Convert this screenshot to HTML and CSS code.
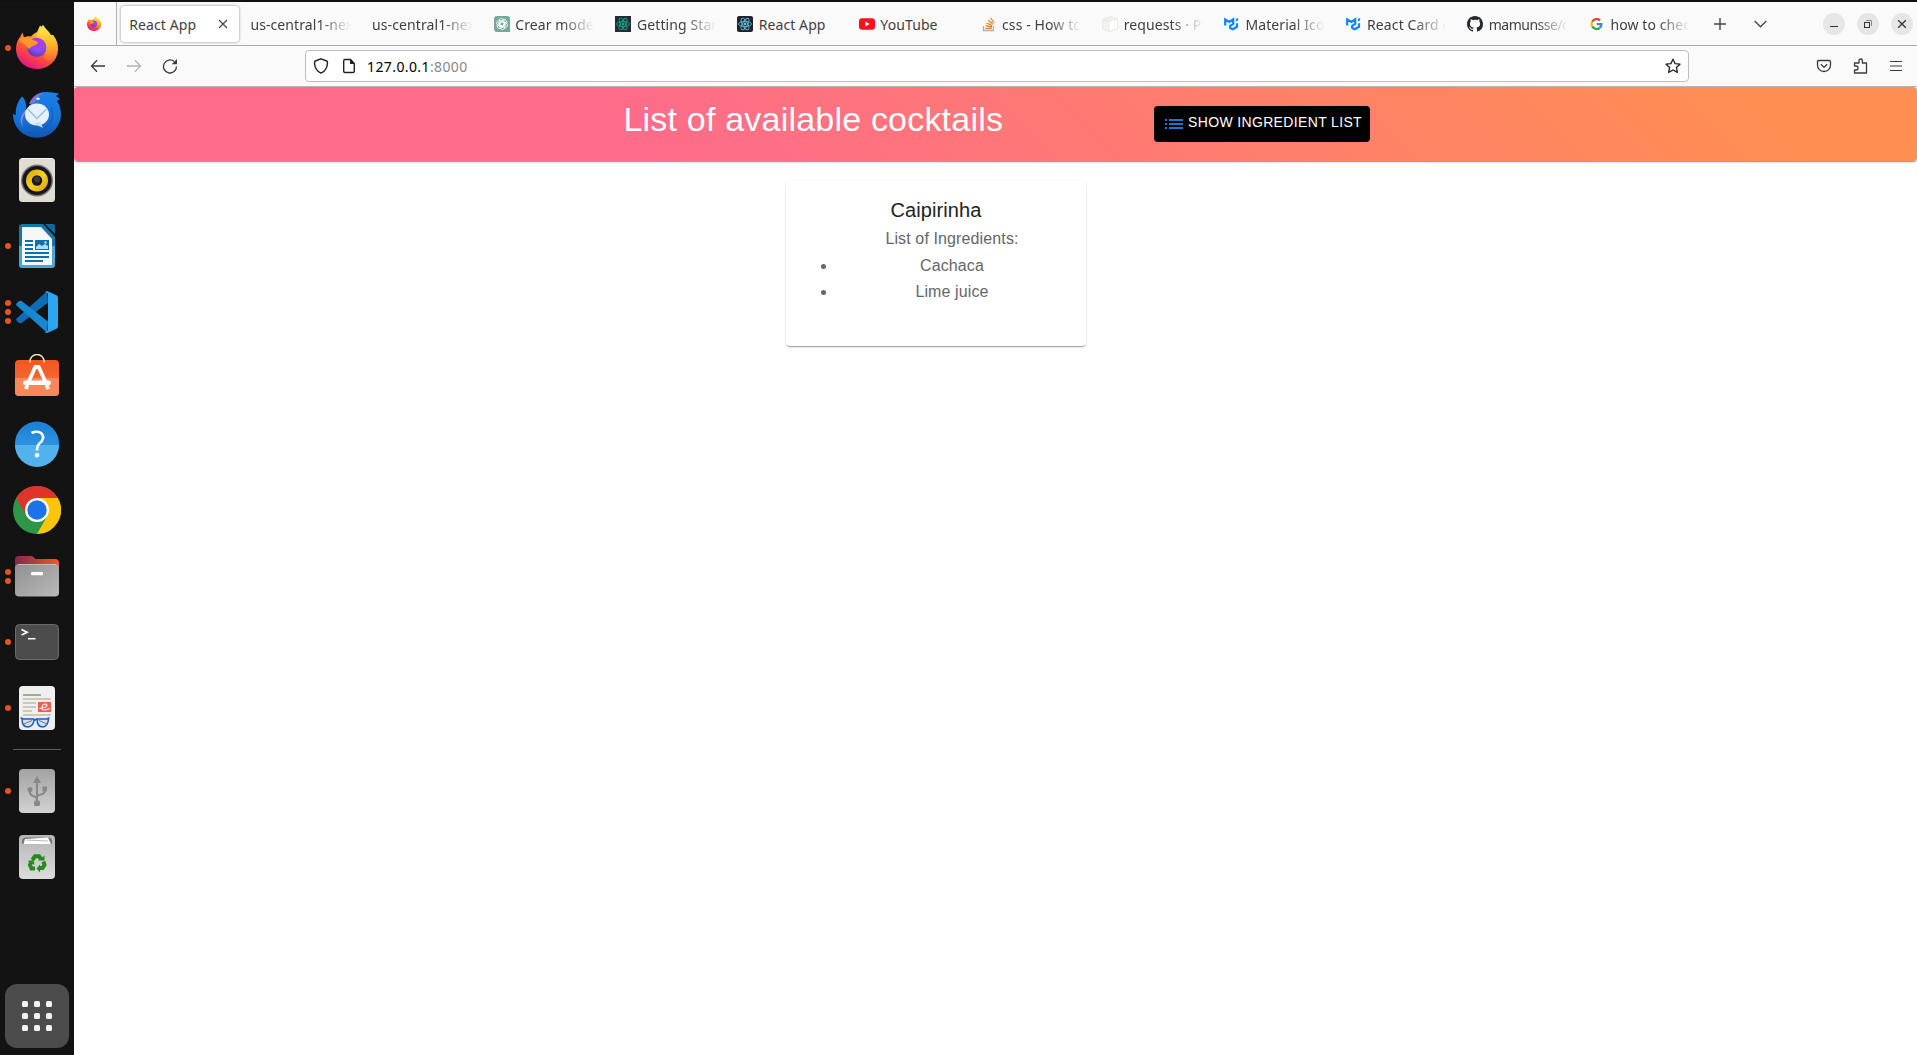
FILE: index.html
```html
<!DOCTYPE html>
<html lang="en">
<head>
<meta charset="utf-8">
<title>React App</title>
<link rel="stylesheet" href="styles.css">
</head>
<body>
<svg class="defs" width="0" height="0" aria-hidden="true">
  <defs>
    <linearGradient id="fxBody" x1=".8" y1="0" x2=".3" y2="1"><stop offset="0" stop-color="#fff44f"/><stop offset=".35" stop-color="#ffa21f"/><stop offset=".68" stop-color="#ff4b3c"/><stop offset="1" stop-color="#e0128c"/></linearGradient>
    <linearGradient id="fxTail" x1="0" y1="0" x2="0" y2="1"><stop offset="0" stop-color="#fff04c"/><stop offset=".55" stop-color="#ffb52a"/><stop offset="1" stop-color="#ff6a35"/></linearGradient>
    <radialGradient id="fxGlobe" cx=".6" cy=".25" r=".8"><stop offset="0" stop-color="#b833e1"/><stop offset=".5" stop-color="#8d4df0"/><stop offset="1" stop-color="#5a3ab8"/></radialGradient>
    <linearGradient id="bird" x1="0" y1="0" x2="0" y2="1"><stop offset="0" stop-color="#1c80e6"/><stop offset=".6" stop-color="#1373d9"/><stop offset="1" stop-color="#1454b0"/></linearGradient>
    <linearGradient id="yellow" x1="0" y1="0" x2="1" y2="1"><stop offset="0" stop-color="#d9a200"/><stop offset=".5" stop-color="#f7cf2b"/><stop offset="1" stop-color="#d9a200"/></linearGradient>
    <linearGradient id="store" x1="0" y1="0" x2="0" y2="1"><stop offset="0" stop-color="#f2571f"/><stop offset="1" stop-color="#f77443"/></linearGradient>
    <linearGradient id="help" x1="0" y1="0" x2="0" y2="1"><stop offset="0" stop-color="#1a7fd6"/><stop offset="1" stop-color="#3da4e6"/></linearGradient>
    <linearGradient id="folderBack" x1="0" y1="0" x2="1" y2="0"><stop offset="0" stop-color="#80294f"/><stop offset="1" stop-color="#f05a22"/></linearGradient>
    <linearGradient id="grey" x1="0" y1="0" x2="1" y2="1"><stop offset="0" stop-color="#8f8f8f"/><stop offset="1" stop-color="#bababa"/></linearGradient>
    <linearGradient id="drive" x1="0" y1="0" x2="0" y2="1"><stop offset="0" stop-color="#a2a2a2"/><stop offset="1" stop-color="#d2d2d2"/></linearGradient>
    <linearGradient id="can" x1="0" y1="0" x2="0" y2="1"><stop offset="0" stop-color="#b5b5b5"/><stop offset="1" stop-color="#dcdcdc"/></linearGradient>
    <symbol id="firefox" viewBox="0 0 48 48">
      <path d="M27 1.500C30 3 31.500 6 34 9.500C36.500 11 38 13 38.500 15L40 11C43.500 15.500 45.200 20 45 25.500C44.500 37 35.500 45 24 45C12 45 3.500 36.500 3 25.500C3 20 4.500 16 7 13L9.500 8.500L11 13.500C14 12 16 12 18 12.500C21 9 23 8.500 24 8Z" fill="url(#fxBody)"/>
      <path d="M30 .8C32 5 36 7 38 11L40 11C44 16 45.500 23 44 29C41 38 34 38 31 34C34 28 34 22 30 18C27 15 24 14 23 13C24 8 27 6 30 .8Z" fill="url(#fxTail)"/>
      <circle cx="23.700" cy="23.400" r="9.600" fill="url(#fxGlobe)"/>
      <path d="M6 16C10 12 16 13 20 16C23 17 26 18 25 19C22 22 19 21 16 25C14 22 10 19 6 16Z" fill="#ff982c"/>
    </symbol>
    <symbol id="react" viewBox="0 0 16 16">
      <g fill="none" stroke="currentColor" stroke-width=".9"><ellipse cx="8" cy="8" rx="6.500" ry="2.500"/><ellipse cx="8" cy="8" rx="6.500" ry="2.500" transform="rotate(60 8 8)"/><ellipse cx="8" cy="8" rx="6.500" ry="2.500" transform="rotate(120 8 8)"/></g><circle cx="8" cy="8" r="1.400" fill="currentColor"/>
    </symbol>
    <symbol id="mui" viewBox="0 0 16 16">
      <path d="M1.200 9.500V3.400L5.400 6L9.200 3.400V8L6.200 9.800V12L8.800 13.200L13 10.800V7.200" fill="none" stroke="#0a84ff" stroke-width="2.200"/><path d="M11.900 3L14.100 2V4.400L11.900 5.500Z" fill="#0a84ff"/>
    </symbol>
  </defs>
</svg>
<div class="desktop">
  <nav class="dock">
    <div class="slot"><span class="dots"><i></i></span><svg viewBox="0 0 48 48"><use href="#firefox"/></svg></div>
    <div class="slot"><span class="dots"></span><svg viewBox="0 0 48 48">
      <path d="M9 6.500C12 9 14 14 13 20L17 16C18 7 24 2 33 2C38 2 42 3 46 3.500L43 6L47 9L44 11C47 16 48 20 48 25C47 38 37 47.700 24 47.700C10 47.700 0 37 0 24L3 25C2 18 5 11 9 6.500Z" fill="url(#bird)"/>
      <path d="M16 14C19 6 25 3 31 2.500C26 6 23 9 22 13Z" fill="#7b70dc"/>
      <path d="M13 20C7 25 6 32 10 37C8 30 10 25 14 22Z" fill="#8b8be6"/>
      <ellipse cx="24" cy="24.500" rx="12" ry="11" fill="#e7f0fc"/><path d="M20 33L30 38L27 32Z" fill="#c9dff8"/>
      <path d="M14.500 19L24 28.500L33.500 19" fill="none" stroke="#9bbbe0" stroke-width="1.300"/>
      <ellipse cx="25" cy="8.800" rx="1.800" ry="1.200" fill="#e9f4ff"/><path d="M38 17C41 26 39 34 31 39" fill="none" stroke="#1960bd" stroke-width="1.500"/>
    </svg></div>
    <div class="slot"><span class="dots"></span><svg viewBox="0 0 48 48">
      <rect x="6" y="2" width="36" height="44" rx="3.500" fill="#e2ddd3"/><path d="M9 2.500H39" stroke="#f7f5ef"/>
      <circle cx="24" cy="24.500" r="16" fill="#77767b"/><circle cx="24" cy="24.500" r="14.600" fill="#16141c"/><circle cx="24" cy="24.500" r="11" fill="url(#yellow)"/><circle cx="24" cy="24.500" r="5.200" fill="#17181a"/><circle cx="24" cy="23.500" r="3" fill="#3a3a3c"/>
    </svg></div>
    <div class="slot"><span class="dots"><i></i></span><svg viewBox="0 0 48 48">
      <path d="M9 2H30L42 15V42.500A3.500 3.500 0 0 1 38.500 46H9.500A3.500 3.500 0 0 1 6 42.500V5.500A3.500 3.500 0 0 1 9 2Z" fill="#1575ad"/><path d="M6 24H42V42.500A3.500 3.500 0 0 1 38.500 46H9.500A3.500 3.500 0 0 1 6 42.500Z" fill="#45a6da"/>
      <path d="M10 5H28L39 17V43H10A1 1 0 0 1 9 42V6A1 1 0 0 1 10 5Z" fill="#f7f7f7"/><path d="M32 2H40A2 2 0 0 1 42 4V12Z" fill="#0c6b9f"/>
      <path d="M12 19H20M12 23H20M12 27H20M12 31H36M12 35H36M12 39H30" stroke="#126ea8" stroke-width="2"/><rect x="22" y="18" width="14" height="10" fill="#126ea8"/><path d="M23 27V25L26 22L29 24L32 22L35 24V27Z" fill="#a9ddf8"/><circle cx="32.500" cy="20.500" r="1.200" fill="#a9ddf8"/>
    </svg></div>
    <div class="slot"><span class="dots"><i></i><i></i><i></i></span><svg viewBox="0 0 48 48">
      <path d="M34 3.200L3.600 30.500Q2.600 31.800 3.800 32.900L6.300 35Q7.500 35.700 8.600 34.900L35 14.500Z" fill="#0c6cb5"/>
      <path d="M34 44.800L3.600 17.500Q2.600 16.200 3.800 15.100L6.300 13Q7.500 12.300 8.600 13.100L35 33.500Z" fill="#1687d0"/>
      <path d="M34 3L43.500 7.300Q45 8 45 9.700V38.300Q45 40 43.500 40.700L34 45C32.500 45 31.800 44.200 31.500 43.800Q35 44 35 41V7Q35 4 31.500 4.200Z" fill="#2aa6f2"/>
    </svg></div>
    <div class="slot"><span class="dots"></span><svg viewBox="0 0 48 48">
      <rect x="2" y="6" width="44" height="36" rx="4" fill="url(#store)"/><path d="M2 24H46V38A4 4 0 0 1 42 42H6A4 4 0 0 1 2 38Z" fill="#f88759"/>
      <path d="M17 8.500V7.500A7 7 0 0 1 31 7.500V8.500" fill="none" stroke="#f5dfb8" stroke-width="1.500"/>
      <path d="M15.500 28L22.300 13H25.700L32.500 28M14.500 31L12.800 35M33.500 31L35.200 35" fill="none" stroke="#fff" stroke-width="3.800"/><rect x="10" y="26.500" width="28" height="4.500" rx="2.200" fill="#fff"/>
    </svg></div>
    <div class="slot"><span class="dots"></span><svg viewBox="0 .5 48 48">
      <circle cx="24" cy="24" r="22" fill="url(#help)"/><path d="M2 25.500H46A22 22 0 0 1 2 25.500Z" fill="#51b2ed"/>
      <path d="M18.500 13.500Q24 11 28 13.500Q32 17 28.500 22Q24 25 24 31" fill="none" stroke="#fff" stroke-width="2.600"/><circle cx="24" cy="35.700" r="2.300" fill="#fff"/>
    </svg></div>
    <div class="slot"><span class="dots"></span><svg viewBox="0 0 48 48">
      <circle cx="24" cy="24" r="24" fill="#2d9648"/><path d="M3.200 12A24 24 0 0 1 44.800 12H24V24L13.600 30Z" fill="#e0342b"/><path d="M44.800 12A24 24 0 0 1 24 48L34.400 30L24 12Z" fill="#fdc60b"/>
      <circle cx="24" cy="24" r="12" fill="#fff"/><circle cx="24" cy="24" r="9.700" fill="#1a73e8"/>
    </svg></div>
    <div class="slot"><span class="dots"><i></i><i></i></span><svg viewBox="0 0 48 48">
      <path d="M2 16V8A4 4 0 0 1 6 4H18Q20 4 21 5.500L22.500 7H42A4 4 0 0 1 46 11V16Z" fill="url(#folderBack)"/><rect x="2" y="12" width="44" height="32.500" rx="4" fill="url(#grey)"/><path d="M5 12.500H43" stroke="#bcbcbc"/><rect x="18" y="20" width="12" height="3.200" rx="1" fill="#fff"/>
    </svg></div>
    <div class="slot"><span class="dots"><i></i></span><svg viewBox="0 0 48 48">
      <rect x="2.500" y="6.500" width="43" height="35" rx="4" fill="#4c4c4c" stroke="#6b6b6b"/><path d="M8.500 11.500L14.200 14.200L8.500 17" fill="none" stroke="#fff" stroke-width="1.600"/><path d="M15 20.700H22.500" stroke="#fff" stroke-width="1.500"/>
    </svg></div>
    <div class="slot"><span class="dots"><i></i></span><svg viewBox="0 0 48 48">
      <rect x="6" y="2" width="36" height="44" rx="4" fill="#efefef"/><path d="M10 11H28" stroke="#aaa58f" stroke-width="2"/><path d="M10 15H38M10 19H23M10 23H23M10 27H19M10 31H38" stroke="#cdc9ba" stroke-width="2"/>
      <rect x="25" y="18" width="13" height="10" fill="#f75c4f"/><path d="M26.500 24.500Q34.500 23.500 34 21Q32.500 18.800 29.500 21.500Q27.500 25.500 31 26Q33.500 26 36.500 24.500" fill="none" stroke="#fff" stroke-width="1.100"/>
      <path d="M7.500 33.700L10 35H20.500L22 36L23.500 35H34L36.500 33.700M9 35Q9 43 15 43Q21 42 21 35M24 35Q24 43 30 43Q35 42 35.500 35" fill="#8db4e444" stroke="#1c5fc0" stroke-width="1.500"/><path d="M11 40L19 36.500M26 36.500L34 40" stroke="#777"/>
    </svg></div>
    <hr>
    <div class="slot"><span class="dots"><i></i></span><svg viewBox="0 0 48 48">
      <rect x="6" y="2" width="36" height="44" rx="4" fill="url(#drive)"/><path d="M24 14V36M24 33Q24 30 20 29Q16 27 16.500 22M24 31Q24 28 28 27.500Q32 27 32 22" fill="none" stroke="#888" stroke-width="2"/><path d="M20 16L24 9L28 16Z" fill="#888"/><circle cx="17" cy="22.500" r="2.500" fill="#888"/><rect x="29.500" y="19.500" width="4.500" height="5" fill="#888"/><rect x="21" y="33.500" width="6" height="5.500" rx="1.500" fill="#888"/>
    </svg></div>
    <div class="slot"><span class="dots"></span><svg viewBox="0 0 48 48">
      <rect x="6" y="2" width="36" height="44" rx="4" fill="url(#can)"/><path d="M9 11V8Q9 4.500 13 4.500H35Q39 4.500 39 8V11Z" fill="#777"/><path d="M10.500 11L12 6L35 4.500L38 11Z" fill="#fff"/><path d="M13 7L35 8" stroke="#bbb"/>
      <g fill="none" stroke="#26891b" stroke-width="4"><path d="M19.300 27L22 23.300H26L28 26"/><path d="M30.500 28.500L31.500 32L29.500 35H26"/><path d="M22 35.500H18.500L17 32L18 29.500"/></g><path d="M25 27.500H31.500V22.500ZM27 31.500V39.500L23.500 35.500ZM14.500 28L20.500 27L21.500 32Z" fill="#26891b"/>
    </svg></div>
    <div class="apps"><i></i><i></i><i></i><i></i><i></i><i></i><i></i><i></i><i></i></div>
  </nav>

  <main class="window">
    <div class="tabs">
      <div class="pinned"><svg class="fav" viewBox="0 0 48 48"><use href="#firefox"/></svg></div>
      <div class="tab active"><span class="label">React App</span><svg width="10" height="10" viewBox="0 0 10 10"><path d="M1 1L9 9M9 1L1 9" stroke="#444" stroke-width="1.100"/></svg></div>
      <div class="tab"><span class="label fade">us-central1-nex</span></div>
      <div class="tab"><span class="label fade">us-central1-nex</span></div>
      <div class="tab"><svg class="fav" viewBox="0 0 16 16"><path d="M3 0H13A3 3 0 0 1 16 3V16H3A3 3 0 0 1 0 13V3A3 3 0 0 1 3 0Z" fill="#74aa9c"/><g fill="none" stroke="#fff" stroke-width=".85"><rect x="5" y="2.500" width="5" height="8" rx="2.500"/><rect x="5" y="2.500" width="5" height="8" rx="2.500" transform="rotate(60 8 8)"/><rect x="5" y="2.500" width="5" height="8" rx="2.500" transform="rotate(120 8 8)"/><rect x="5" y="2.500" width="5" height="8" rx="2.500" transform="rotate(180 8 8)"/><rect x="5" y="2.500" width="5" height="8" rx="2.500" transform="rotate(240 8 8)"/><rect x="5" y="2.500" width="5" height="8" rx="2.500" transform="rotate(300 8 8)"/></g></svg><span class="label fade">Crear mode</span></div>
      <div class="tab"><svg class="fav dark-green" viewBox="0 0 16 16"><use href="#react"/></svg><span class="label fade">Getting Star</span></div>
      <div class="tab"><svg class="fav dark-blue" viewBox="0 0 16 16"><use href="#react"/></svg><span class="label">React App</span></div>
      <div class="tab"><svg class="fav" viewBox="0 0 16 16"><rect y="2.300" width="16" height="11.400" rx="3" fill="#ff1021"/><path d="M6.400 5.600V10.400L10.600 8Z" fill="#fff"/></svg><span class="label">YouTube</span></div>
      <div class="tab"><svg class="fav" viewBox="0 0 16 16"><path d="M2.500 10V14.500H12.500V10" fill="none" stroke="#b0b0b0" stroke-width="1.300"/><path d="M4.300 12.300H10.800M4.500 9.700L10.900 11M5.400 7L11.200 9.700M7.200 4.300L12 8.300M9.700 2L13.100 7" stroke="#f48024" stroke-width="1.300"/></svg><span class="label fade">css - How to</span></div>
      <div class="tab"><svg class="fav" viewBox="0 0 16 16"><path d="M.5 3.500L9 .5L15.500 3V12.500L7 15.500L.5 13Z" fill="#f3f2ef" stroke="#e6e5e1" stroke-width=".8"/><path d="M7 5.500L15.500 3V12.500L7 15.500Z" fill="#fff" stroke="#e6e5e1" stroke-width=".8"/><path d="M.5 3.500L7 5.500" stroke="#e6e5e1"/></svg><span class="label fade">requests · Py</span></div>
      <div class="tab"><svg class="fav" viewBox="0 0 16 16"><use href="#mui"/></svg><span class="label fade">Material Ico</span></div>
      <div class="tab"><svg class="fav" viewBox="0 0 16 16"><use href="#mui"/></svg><span class="label fade">React Card c</span></div>
      <div class="tab"><svg class="fav" viewBox="0 0 16 16"><path d="M8 0C3.580 0 0 3.580 0 8c0 3.540 2.290 6.530 5.470 7.590.4.070.55-.17.55-.38 0-.19-.01-.82-.01-1.490-2.010.37-2.530-.49-2.690-.94-.09-.23-.48-.94-.82-1.130-.28-.15-.68-.52-.01-.53.63-.01 1.080.58 1.230.82.72 1.210 1.870.87 2.330.66.07-.52.28-.87.51-1.070-1.780-.2-3.640-.89-3.640-3.950 0-.87.31-1.590.82-2.150-.08-.2-.36-1.020.08-2.120 0 0 .67-.21 2.200.82.64-.18 1.320-.27 2-.27s1.360.09 2 .27c1.530-1.040 2.200-.82 2.200-.82.44 1.100.16 1.920.08 2.120.51.56.82 1.270.82 2.150 0 3.070-1.870 3.750-3.650 3.950.29.25.54.73.54 1.480 0 1.070-.01 1.930-.01 2.200 0 .21.15.46.55.38A8.010 8.010 0 0 0 16 8c0-4.420-3.580-8-8-8Z" fill="#24292f"/></svg><span class="label fade narrow">mamunsse/c</span></div>
      <div class="tab"><svg class="fav" viewBox="0 0 16 16"><circle cx="8" cy="8" r="8" fill="#fff"/><g fill="none" stroke-width="2.300"><path d="M11.100 4.500A5 5 0 0 0 3.100 5.700" stroke="#ea4335"/><path d="M3.100 5.700A5 5 0 0 0 3.100 10.300" stroke="#fbbc05"/><path d="M3.100 10.300A5 5 0 0 0 10.800 11.800" stroke="#34a853"/><path d="M10.800 11.800A5 5 0 0 0 12.400 8.200H7.700" stroke="#4285f4"/></g></svg><span class="label fade">how to chec</span></div>
      <div class="tab-tools">
        <svg width="12" height="12" viewBox="0 0 12 12"><path d="M6 0V12M0 6H12" stroke="#444" stroke-width="1.400"/></svg>
        <svg width="13" height="8" viewBox="0 0 13 8"><path d="M.7 1L6.500 6.800L12.300 1" fill="none" stroke="#444" stroke-width="1.300"/></svg>
      </div>
      <div class="controls">
        <span><svg viewBox="0 0 22 22"><path d="M7 13.500H15" stroke="#333"/></svg></span>
        <span><svg viewBox="0 0 22 22"><path d="M9 7.500H14.500V13" fill="none" stroke="#888"/><rect x="7.500" y="9.500" width="5" height="5" fill="none" stroke="#333"/></svg></span>
        <span><svg viewBox="0 0 22 22"><path d="M7.200 7.200L14.800 14.800M14.800 7.200L7.200 14.800" stroke="#333" stroke-width="1.300"/></svg></span>
      </div>
    </div>
    <div class="toolbar">
      <div class="nav">
        <svg width="16" height="16" viewBox="0 0 16 16"><path d="M15 8H1.500M7 2.300L1.500 8L7 13.700" fill="none" stroke="#3a3a3f" stroke-width="1.300"/></svg>
        <svg width="16" height="16" viewBox="0 0 16 16"><path d="M1 8H14.500M9 2.300L14.500 8L9 13.700" fill="none" stroke="#b3b3b5" stroke-width="1.300"/></svg>
        <svg width="16" height="16" viewBox="0 0 16 16"><path d="M14.500 8.500A6.500 6.500 0 1 1 12.300 3.600" fill="none" stroke="#3a3a3f" stroke-width="1.300"/><path d="M15 1V6.200H9.800Z" fill="#3a3a3f"/></svg>
      </div>
      <div class="urlbar">
        <svg width="16" height="16" viewBox="0 0 16 16"><path d="M8 .8L13.700 3Q14.500 3.300 14.500 4.200C14.500 9 12.500 13 8 15.200C3.500 13 1.500 9 1.500 4.200Q1.500 3.300 2.300 3Z" fill="none" stroke="#222" stroke-width="1.400"/></svg>
        <svg width="16" height="16" viewBox="0 0 16 16"><path d="M9.500 1.500H4Q2.700 1.500 2.700 2.800V13.200Q2.700 14.500 4 14.500H12Q13.300 14.500 13.300 13.200V5.500Z" fill="none" stroke="#222" stroke-width="1.400"/><path d="M9 1L14 6H9Z" fill="#222"/></svg>
        <span class="address">127.0.0.1<span class="port">:8000</span></span>
        <svg width="16" height="16" viewBox="0 0 16 16"><path d="M8 1.200L10.100 5.600L15 6.200L11.400 9.500L12.400 14.400L8 12L3.600 14.400L4.600 9.500L1 6.200L5.900 5.600Z" fill="none" stroke="#222" stroke-width="1.300" stroke-linejoin="round"/></svg>
      </div>
      <div class="actions">
        <svg width="16" height="16" viewBox="0 0 16 16"><path d="M2.800 2.500H13.200Q14.500 2.500 14.500 3.800V7A6.500 6.500 0 0 1 1.500 7V3.800Q1.500 2.500 2.800 2.500Z" fill="none" stroke="#3a3a3f" stroke-width="1.300"/><path d="M4.800 6.200L8 9.400L11.200 6.200" fill="none" stroke="#3a3a3f" stroke-width="1.300"/></svg>
        <svg width="16" height="16" viewBox="0 0 16 16"><path d="M2.500 7V5H7V2.700A1.700 1.700 0 0 1 10.400 2.700V5H14.500V15H2.500V12H4A1.800 1.800 0 0 0 4 8H2.500Z" fill="none" stroke="#3a3a3f" stroke-width="1.300" stroke-linejoin="round"/></svg>
        <svg width="16" height="16" viewBox="0 0 16 16"><path d="M2 3.500H14M2 8H14M2 12.500H14" stroke="#3a3a3f" stroke-width="1.200"/></svg>
      </div>
    </div>
    <header class="banner">
      <h1>List of available cocktails</h1>
      <button class="show-list"><svg width="18" height="10" viewBox="0 0 18 10"><path d="M0 1H2M4 1H18M0 5H2M4 5H18M0 9H2M4 9H18" stroke="#1976d2" stroke-width="2"/></svg><span>SHOW INGREDIENT LIST</span></button>
    </header>
    <article class="card">
      <h2>Caipirinha</h2>
      <ul>
        <li class="caption">List of Ingredients:</li>
        <li>Cachaca</li>
        <li>Lime juice</li>
      </ul>
    </article>
  </main>
</div>
</body>
</html>
```
FILE: styles.css
```css
* { box-sizing: border-box; }
body { margin: 0; background: #fff; overflow: hidden; font-family: "Liberation Sans", Arial, sans-serif; }
svg { display: block; flex: none; }
.defs { position: absolute; }
.desktop { display: flex; height: 1055px; border-top: 2px solid #111; }

.dock { width: 74px; flex: none; display: flex; flex-direction: column; background: #131313; padding: 13px 5px 7px; }
.slot { height: 66px; display: flex; align-items: center; gap: 2px; flex: none; }
.slot svg { width: 48px; height: 48px; }
.dots { width: 6px; display: flex; flex-direction: column; gap: 3px; flex: none; }
.dots i { width: 6px; height: 6px; border-radius: 50%; background: #e95420; }
.dock hr { width: 48px; height: 1px; border: 0; background: #5c5c5c; margin: 8px 0 8px 8px; flex: none; }
.apps { margin-top: auto; width: 64px; height: 64px; border-radius: 12px; background: #4c4c4c; display: grid; grid-template-columns: repeat(3, 6px); gap: 6px; place-content: center; }
.apps i { width: 6px; height: 6px; border-radius: 1.500px; background: #f2f2f2; }

.window { flex: 1; min-width: 0; display: flex; flex-direction: column; }
.tabs { height: 44px; flex: none; display: flex; background: #fafafa; border-bottom: 1px solid #adadad; font: 14px "Noto Sans", sans-serif; color: #3f3f3f; }
.pinned { width: 43px; border-right: 1px solid #b0b0b0; margin-right: 1.200px; padding-left: 12px; display: flex; align-items: center; flex: none; }
.fav { width: 16px; height: 16px; margin-right: 5.500px; }
.tab { width: 121.700px; flex: none; display: flex; align-items: center; padding: 1px 10.500px 0; }
.tab .fav { margin-top: -1px; }
.label { flex: 1; min-width: 0; margin-top: 1px; white-space: nowrap; overflow: hidden; line-height: 20px; letter-spacing: .1px; }
.fade { -webkit-mask-image: linear-gradient(90deg, #000 calc(100% - 32px), transparent); mask-image: linear-gradient(90deg, #000 calc(100% - 32px), transparent); }
.fade.narrow { letter-spacing: -.5px; }
.active { width: 118px; margin: 4px .7px 3px 3px; padding: 0 11px 0 8px; background: #fff; border-radius: 4px; box-shadow: 0 0 3px rgba(0, 0, 0, .45); }
.dark-green { background: #252a36; color: #0ea67f; }
.dark-blue { background: #20232a; color: #61b9d6; border-radius: 2px; }
.tab-tools { display: flex; align-items: center; gap: 28px; margin-left: 13.500px; }
.controls { margin-left: auto; margin-right: 4px; display: flex; align-items: center; gap: 12px; }
.controls span { width: 22px; height: 22px; border-radius: 50%; background: #e6e6e6; }
.controls svg { width: 22px; height: 22px; }

.toolbar { height: 41px; flex: none; display: flex; align-items: center; background: #fafafa; border-bottom: 1px solid #bcbcbc; }
.nav { display: flex; gap: 20px; padding-left: 16px; width: 231px; flex: none; }
.urlbar { width: 1384px; height: 32px; flex: none; border: 1px solid #bfbfbf; border-radius: 4px; background: #fff; display: flex; align-items: center; padding: 0 7px; gap: 12px; }
.address { flex: 1; margin-left: -2px; font: 14px "Noto Sans", sans-serif; color: #000; letter-spacing: .4px; }
.port { color: #888; }
.actions { margin-left: auto; padding-right: 13px; display: flex; gap: 20px; }

.banner { height: 74px; flex: none; display: flex; align-items: flex-start; padding-left: 549.500px; background: linear-gradient(45deg, #fe6b8b 30%, #ff8e53 90%); border-radius: 4px; box-shadow: 0 1px 3px rgba(0, 0, 0, .2), 0 1px 1px rgba(0, 0, 0, .3); color: #fff; }
.banner h1 { width: 530.500px; margin: 11px 0 0; font-weight: 400; font-size: 34px; line-height: 42px; letter-spacing: .2px; white-space: nowrap; }
.show-list { margin: 19px 0 0; width: 216px; height: 36px; padding: 0 0 0 11px; border: 0; border-radius: 4px; background: #000; color: #fff; display: flex; align-items: center; gap: 5px; font: 14px "Liberation Sans", Arial, sans-serif; letter-spacing: .35px; white-space: nowrap; }
.show-list span { margin-top: -5px; }

.card { width: 300px; height: 165px; margin: 20px 0 0 712px; padding: 16px; border-radius: 4px; box-shadow: 0 2px 1px -1px rgba(0, 0, 0, .2), 0 1px 1px rgba(0, 0, 0, .14), 0 1px 3px rgba(0, 0, 0, .12); text-align: center; }
.card h2 { margin: 0; font-weight: 400; font-size: 20px; line-height: 26px; letter-spacing: .1px; color: #212121; }
.card ul { margin: 3px 0 0; padding: 0 3px 0 35px; font-size: 16px; line-height: 26.500px; letter-spacing: .12px; color: #666; }
.card .caption { list-style: none; }
```
